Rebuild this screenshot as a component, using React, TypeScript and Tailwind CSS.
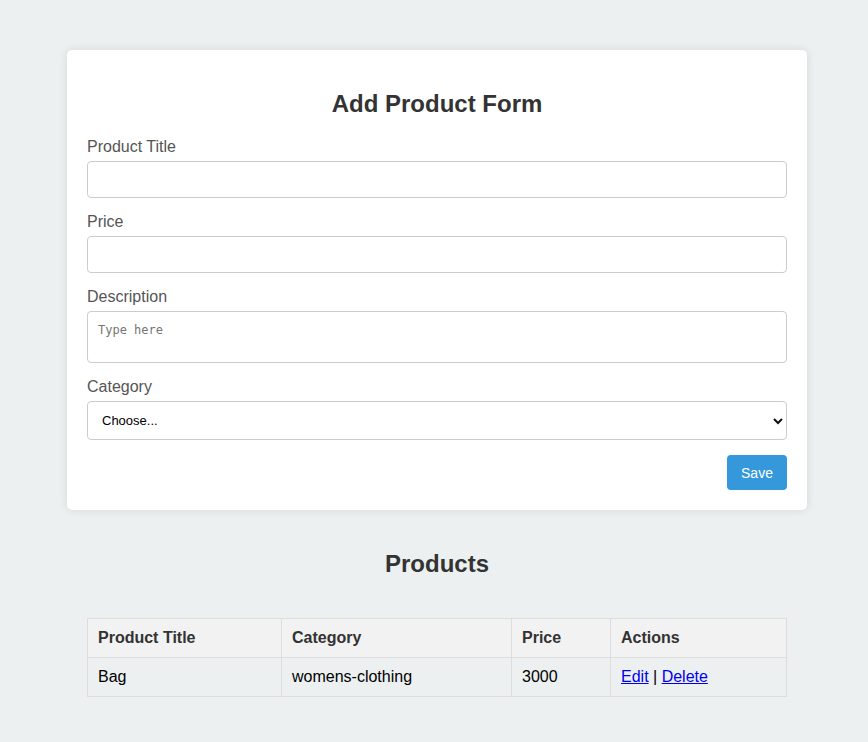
import React from "react";

const products = [{ title: "Bag", category: "womens-clothing", price: 3000 }];

export default function App() {
  return (
    <div className="min-h-screen bg-[#ecf0f1] pt-[50px] pb-10 font-['Liberation_Sans',Arial,sans-serif]">
      <div className="ml-[67px] w-[740px]">
        <form
          className="rounded-[5px] bg-white px-5 pt-5 pb-5 shadow-[0_0_10px_rgba(0,0,0,0.1)]"
          onSubmit={(e) => e.preventDefault()}
        >
          <h2 className="my-5 text-center text-2xl leading-[28px] font-bold text-[#333]">Add Product Form</h2>

          <label className="mb-[5px] block text-base leading-[18px] text-[#555]">Product Title</label>
          <input type="text" className="mb-[15px] block h-[37px] w-full rounded-[4px] border border-[#ccc] px-[10px] text-sm" />

          <label className="mb-[5px] block text-base leading-[18px] text-[#555]">Price</label>
          <input type="number" className="mb-[15px] block h-[37px] w-full rounded-[4px] border border-[#ccc] px-[10px] text-sm" />

          <label className="mb-[5px] block text-base leading-[18px] text-[#555]">Description</label>
          <textarea
            placeholder="Type here"
            className="mb-[15px] block h-[52px] w-full resize-none rounded-[4px] border border-[#ccc] px-[10px] pt-[10px] font-['DejaVu_Sans_Mono',monospace] text-[12px] leading-[16px] placeholder:text-[#757575]"
          />

          <label className="mb-[5px] block text-base leading-[18px] text-[#555]">Category</label>
          <div className="relative mb-[15px]">
            <select className="block h-[39px] w-full appearance-none rounded-[4px] border border-[#ccc] bg-white pl-[14px] pr-8 text-[13px] text-black">
              <option>Choose...</option>
              <option>mens-clothing</option>
              <option>womens-clothing</option>
              <option>electronics</option>
              <option>jewelery</option>
            </select>
            <svg className="pointer-events-none absolute top-[16px] right-[3px]" width="12" height="8" viewBox="0 0 12 8">
              <path d="M2 2l4 4 4-4" fill="none" stroke="#111" strokeWidth="2" />
            </svg>
          </div>

          <div className="flex justify-end">
            <button type="submit" className="h-[35px] w-[60px] rounded-[4px] bg-[#3498db] text-sm text-white">
              Save
            </button>
          </div>
        </form>

        <h2 className="mt-10 mb-10 text-center text-2xl leading-[28px] font-bold text-[#333]">Products</h2>

        <div className="px-5">
          <table className="w-full border-collapse text-base">
            <thead>
              <tr className="bg-[#f2f2f2] text-left text-[#333]">
                <th className="w-[194px] border border-[#ddd] px-[10px] py-[10px] leading-[18px] font-bold">Product Title</th>
                <th className="w-[230px] border border-[#ddd] px-[10px] py-[10px] leading-[18px] font-bold">Category</th>
                <th className="w-[99px] border border-[#ddd] px-[10px] py-[10px] leading-[18px] font-bold">Price</th>
                <th className="border border-[#ddd] px-[10px] py-[10px] leading-[18px] font-bold">Actions</th>
              </tr>
            </thead>
            <tbody>
              {products.map((p) => (
                <tr key={p.title} className="text-black">
                  <td className="border border-[#ddd] px-[10px] py-[10px] leading-[18px]">{p.title}</td>
                  <td className="border border-[#ddd] px-[10px] py-[10px] leading-[18px]">{p.category}</td>
                  <td className="border border-[#ddd] px-[10px] py-[10px] leading-[18px]">{p.price}</td>
                  <td className="border border-[#ddd] px-[10px] py-[10px] leading-[18px]">
                    <a href="#" className="text-[#0000ee] underline">Edit</a> | <a href="#" className="text-[#0000ee] underline">Delete</a>
                  </td>
                </tr>
              ))}
            </tbody>
          </table>
        </div>
      </div>
    </div>
  );
}
